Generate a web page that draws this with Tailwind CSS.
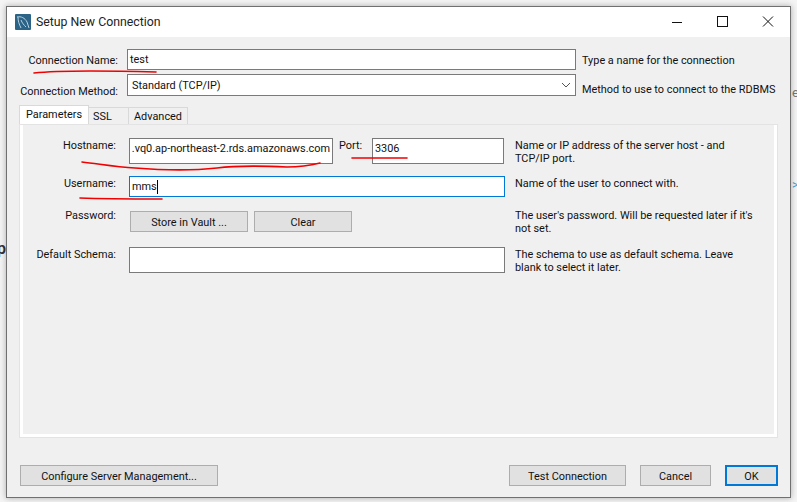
<!DOCTYPE html>
<html lang="en">
<head>
    <meta charset="UTF-8">
    <title>Setup New Connection</title>
    <script src="https://cdn.jsdelivr.net/npm/@tailwindcss/browser@4"></script>
</head>
<body class="relative h-[502px] w-[797px] overflow-hidden bg-[#f4f4f4] font-['Roboto',sans-serif] text-[10.9px] leading-[13px] text-[#111]">

    <!-- bits of the page behind the dialog -->
    <span class="absolute left-[-3px] top-[242px] text-[16px] font-semibold text-[#333]">p</span>
    <span class="absolute left-[792px] top-[179px] text-[12px] text-[#4a9fd8]">&gt;</span>
    <span class="absolute left-[792px] top-[86px] text-[13px] text-[#777]">e</span>

    <div class="absolute left-[6px] top-[6px] flex h-[492px] w-[785px] flex-col border border-[#707070] bg-[#f0f0f0] shadow-[0_0_6px_rgba(0,0,0,0.3)]">

        <!-- title bar -->
        <div class="flex h-[30px] shrink-0 items-center bg-white pl-[8px]">
            <svg width="16" height="16" viewBox="0 0 16 16">
                <rect width="16" height="16" rx="1" fill="#2b6487"/>
                <path d="M2 3c4-1 8 1 10 5 1 2 1 4 2 6M3 3c0 4 1 7 3 11M6 6c1 3 3 5 5 7" fill="none" stroke="#b9d0de" stroke-width="1"/>
            </svg>
            <span class="ml-[5px] text-[12.3px] text-[#222]">Setup New Connection</span>
            <div class="ml-auto flex items-center">
                <svg width="46" height="30" viewBox="0 0 46 30"><path d="M20 15.5h10" stroke="#111" fill="none"/></svg>
                <svg width="46" height="30" viewBox="0 0 46 30"><rect x="19.5" y="9.5" width="10" height="10" stroke="#111" fill="none"/></svg>
                <svg width="46" height="30" viewBox="0 0 46 30"><path d="M19 9.5l10 10M29 9.5l-10 10" stroke="#111" fill="none"/></svg>
            </div>
        </div>

        <!-- top fields -->
        <div class="mt-[12px] flex h-[21px] items-center">
            <label class="mt-[2px] w-[111px] text-right">Connection Name:</label>
            <div class="ml-[9px] flex h-[21px] w-[449px] items-center border border-[#7a7a7a] bg-white pl-[2px]"><span class="mt-[-1px]">test</span></div>
            <span class="ml-[6px] mt-[2px]">Type a name for the connection</span>
        </div>
        <div class="mt-[4px] flex h-[22px] items-center">
            <label class="mt-[12px] w-[111px] text-right">Connection Method:</label>
            <div class="ml-[9px] flex h-[22px] w-[449px] items-center justify-between border border-[#7a7a7a] bg-white px-[4px]">
                <span class="mt-[1px]">Standard (TCP/IP)</span>
                <svg width="10" height="6" viewBox="0 0 10 6"><path d="M1 1l4 4 4-4" fill="none" stroke="#555"/></svg>
            </div>
            <span class="ml-[6px] mt-[9px] whitespace-nowrap">Method to use to connect to the RDBMS</span>
        </div>

        <!-- tabs -->
        <div class="ml-[12px] mt-[9px] flex h-[20px] items-end">
            <div class="flex h-[20px] w-[70px] items-center justify-center border border-b-0 border-[#d9d9d9] bg-white pb-[2px]">Parameters</div>
            <div class="flex h-[18px] w-[40px] items-center border-t border-r border-[#d9d9d9] pl-[4px]">SSL</div>
            <div class="flex h-[18px] w-[59px] items-center justify-center border-t border-r border-[#d9d9d9]">Advanced</div>
        </div>

        <!-- parameters panel -->
        <div class="ml-[13px] flex h-[312px] w-[757px] flex-col border-[3px] border-t-0 border-white bg-[#f0f0f0] pt-[13px] outline outline-[#e3e3e3]">
            <div class="flex">
                <span class="mt-px w-[93px] text-right">Hostname:</span>
                <div class="ml-[13px] flex h-[26px] w-[204px] items-center justify-end overflow-hidden whitespace-nowrap border border-[#7a7a7a] bg-white pr-[2px]"><span class="mt-[-6px]">.vq0.ap-northeast-2.rds.amazonaws.com</span></div>
                <span class="ml-[6px] mt-px w-[33px]">Port:</span>
                <div class="flex h-[26px] w-[132px] items-center border border-[#7a7a7a] bg-white pl-[2px]"><span class="mt-[-6px]">3306</span></div>
                <p class="ml-[11px] mt-px w-[240px]">Name or IP address of the server host - and TCP/IP port.</p>
            </div>
            <div class="mt-[11px] flex">
                <span class="mt-px w-[93px] text-right">Username:</span>
                <div class="ml-[13px] flex h-[21px] w-[376px] items-center border border-[#0078d7] bg-white pl-[2px]">mms<span class="h-[14px] w-px bg-black"></span></div>
                <p class="ml-[10px] mt-px">Name of the user to connect with.</p>
            </div>
            <div class="mt-[14px] flex">
                <span class="mt-[-2px] w-[93px] text-right">Password:</span>
                <button class="ml-[14px] h-[21px] w-[118px] border border-[#adadad] bg-[#e1e1e1] pt-px">Store in Vault ...</button>
                <button class="ml-[6px] h-[21px] w-[98px] border border-[#adadad] bg-[#e1e1e1] pt-px">Clear</button>
                <p class="ml-[163px] mt-[-2px] w-[250px]">The user's password. Will be requested later if it's not set.</p>
            </div>
            <div class="mt-[12px] flex">
                <span class="mt-px w-[93px] text-right">Default Schema:</span>
                <div class="ml-[13px] h-[26px] w-[376px] border border-[#7a7a7a] bg-white"></div>
                <p class="ml-[10px] mt-px w-[240px]">The schema to use as default schema. Leave blank to select it later.</p>
            </div>
        </div>

        <!-- bottom buttons -->
        <div class="mt-[28px] flex pl-[13px]">
            <button class="h-[21px] w-[198px] border border-[#adadad] bg-[#e1e1e1] pt-px">Configure Server Management...</button>
            <button class="ml-[291px] h-[21px] w-[117px] border border-[#adadad] bg-[#e1e1e1] pt-px">Test Connection</button>
            <button class="ml-[14px] h-[21px] w-[71px] border border-[#adadad] bg-[#e1e1e1] pt-px">Cancel</button>
            <button class="ml-[14px] h-[21px] w-[53px] border-2 border-[#0078d7] bg-[#e1e1e1] pt-px">OK</button>
        </div>
    </div>

    <!-- red marker strokes drawn on the screenshot -->
    <svg class="pointer-events-none absolute left-0 top-0" width="797" height="502" viewBox="0 0 797 502" fill="none" stroke="#f00000" stroke-width="1.6" stroke-linecap="round">
        <path d="M34 73C60 70 120 71 156 72"/>
        <path d="M82 162C100 164 115 167 135 168C160 170 190 171 217 168C240 165 265 166 287 167C300 167 312 165 320 163"/>
        <path d="M352 158C370 158 395 158 407 158"/>
        <path d="M80 198C105 199 140 199 162 199"/>
    </svg>
</body>
</html>
